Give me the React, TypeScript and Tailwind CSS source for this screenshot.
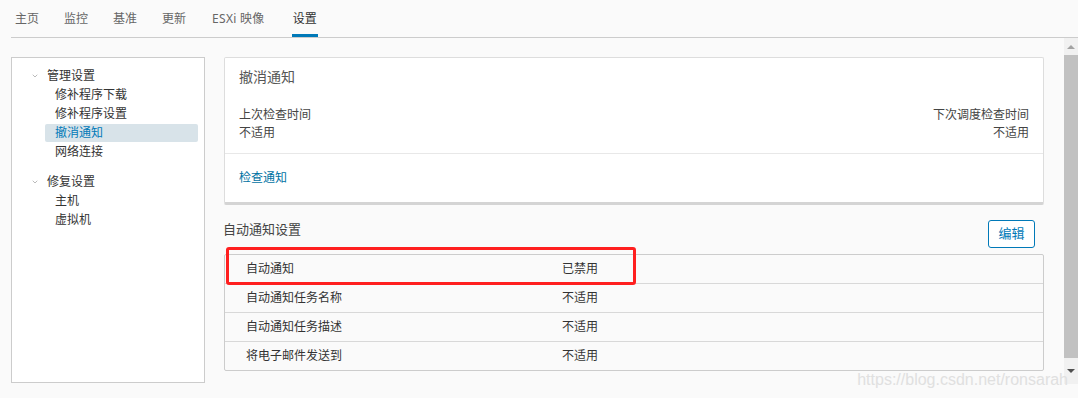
import { ChevronDown } from 'lucide-react';

const tabs = ['主页', '监控', '基准', '更新', 'ESXi 映像', '设置'];

const tree = [
  { title: '管理设置', items: ['修补程序下载', '修补程序设置', '撤消通知', '网络连接'] },
  { title: '修复设置', items: ['主机', '虚拟机'] },
];

const rows = [
  { label: '自动通知', value: '已禁用' },
  { label: '自动通知任务名称', value: '不适用' },
  { label: '自动通知任务描述', value: '不适用' },
  { label: '将电子邮件发送到', value: '不适用' },
];

export default function App() {
  return (
    <div
      className="relative flex h-[398px] w-[1078px] flex-col overflow-hidden bg-[#fafafa] text-[#333]"
      style={{ fontFamily: '"Noto Sans", "Noto Sans CJK SC", sans-serif' }}
    >
      {/* tabs */}
      <div className="ml-[11px] flex h-[38px] shrink-0 items-end gap-[25px] border-b border-[#cccccc] pl-[4px]">
        {tabs.map((t) => (
          <div
            key={t}
            className={
              t === '设置'
                ? 'ml-[2px] flex h-[37px] items-center border-b-[3px] border-[#0079b8] px-[1px] pt-[3px] text-[12px] text-[#333]'
                : t === 'ESXi 映像'
                  ? 'ml-[1px] flex h-[37px] items-center border-b-[3px] border-transparent pt-[3px] text-[12px] tracking-[0.3px] text-[#666]'
                  : 'flex h-[37px] items-center border-b-[3px] border-transparent pt-[3px] text-[12px] text-[#666]'
            }
          >
            {t}
          </div>
        ))}
      </div>

      <div className="flex min-h-0 flex-1">
        <div className="flex flex-1 gap-[19px] pl-[11px] pt-[19px]">
          {/* left tree */}
          <div className="h-[326px] w-[194px] shrink-0 border border-[#cccccc] bg-white pt-[8px]">
            {tree.map((g, gi) => (
              <div key={g.title} className={gi > 0 ? 'mt-[11px]' : ''}>
                <div className="flex h-[19px] items-center text-[12px] text-[#333]">
                  <ChevronDown className="ml-[19px] mr-[8px] h-[8px] w-[8px] text-[#999]" strokeWidth={2} />
                  {g.title}
                </div>
                {g.items.map((it) => (
                  <div key={it} className="flex h-[19px] items-center pl-[33px] pr-[6px]">
                    <div
                      className={
                        it === '撤消通知'
                          ? 'flex h-[18px] flex-1 items-center rounded-[2px] bg-[#d8e3e9] pl-[10px] text-[12px] text-[#0079b8]'
                          : 'flex h-[18px] flex-1 items-center pl-[10px] text-[12px] text-[#333]'
                      }
                    >
                      {it}
                    </div>
                  </div>
                ))}
              </div>
            ))}
          </div>

          {/* right column */}
          <div className="w-[820px] shrink-0">
            <div className="rounded-[2px] border border-[#dddddd] border-b-[3px] border-b-[#d4d4d4] bg-white">
              <div className="px-[14px] pt-[9px] text-[14px] leading-[20px] text-[#565656]">撤消通知</div>
              <div className="flex justify-between px-[14px] pt-[19px] pb-[11px] text-[12px] leading-[18px] text-[#444]">
                <div>
                  <div>上次检查时间</div>
                  <div>不适用</div>
                </div>
                <div className="text-right">
                  <div>下次调度检查时间</div>
                  <div>不适用</div>
                </div>
              </div>
              <div className="border-t border-[#e8e8e8] px-[14px] pt-[15px] pb-[15px] text-[12px] leading-[18px] text-[#0072a3]">
                检查通知
              </div>
            </div>

            <div className="mt-[15px] flex items-end justify-between">
              <div className="mb-[10px] ml-[-1px] text-[13px] leading-[18px] text-[#444]">自动通知设置</div>
              <button className="mr-[9px] h-[28px] w-[47px] rounded-[3px] border border-[#0079b8] bg-white text-[13px] text-[#0079b8]">
                编辑
              </button>
            </div>

            <div className="relative mt-[6px] rounded-[2px] border border-[#cccccc]">
              {rows.map((r, i) => (
                <div
                  key={r.label}
                  className={
                    i > 0
                      ? 'flex h-[29px] items-center border-t border-[#d8d8d8] text-[12px] text-[#333]'
                      : 'flex h-[28px] items-center text-[12px] text-[#333]'
                  }
                >
                  <div className="w-[337px] pl-[21px]">{r.label}</div>
                  <div>{r.value}</div>
                </div>
              ))}
              {/* red highlight */}
              <div className="absolute left-[1px] top-[-8px] h-[38px] w-[410px] rounded-[3px] border-[3px] border-[#ff1f1f]" />
            </div>
          </div>
        </div>

        {/* scrollbar */}
        <div className="flex h-[346px] w-[14px] shrink-0 flex-col items-center bg-[#f1f1f1]">
          <div className="flex h-[17px] items-center justify-center">
            <div className="h-0 w-0 border-x-[4px] border-b-[4px] border-x-transparent border-b-[#a3a3a3]" />
          </div>
          <div className="h-[303px] w-full bg-[#c1c1c1]" />
          <div className="flex h-[26px] items-center justify-center">
            <div className="h-0 w-0 border-x-[4px] border-t-[4px] border-x-transparent border-t-[#505050]" />
          </div>
        </div>
      </div>

      {/* watermark */}
      <div
        className="absolute bottom-[8px] right-[10px] text-[16px] leading-[20px] text-[#e0e0e0]"
        style={{ fontFamily: '"Liberation Sans", sans-serif' }}
      >
        https://blog.csdn.net/ronsarah
      </div>
    </div>
  );
}
